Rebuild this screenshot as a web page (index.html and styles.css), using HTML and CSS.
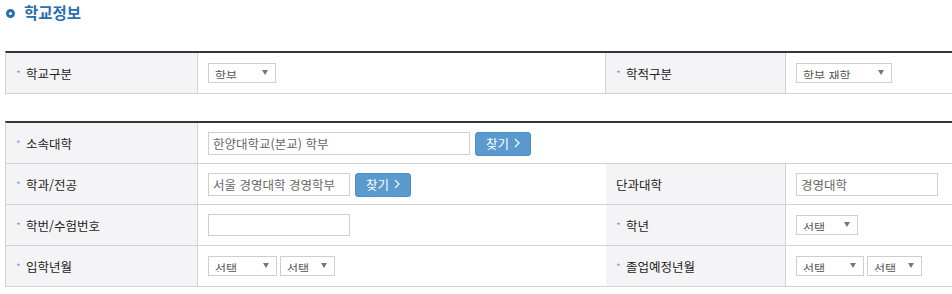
FILE: index.html
```html
<!DOCTYPE html>
<html lang="ko">
<head>
    <meta charset="UTF-8">
    <title>학교정보</title>
    <link rel="stylesheet" href="styles.css">
</head>
<body>

<div class="section">
    <h2 class="sec-title"><span class="dot"></span>학교정보</h2>

    <div class="form-grid">
        <div class="th"><span class="req">*</span>학교구분</div>
        <div class="td">
            <div class="sel w68"><span class="sel-text">학부</span><i class="arr"></i></div>
        </div>
        <div class="th"><span class="req">*</span>학적구분</div>
        <div class="td">
            <div class="sel w96"><span class="sel-text">학부 재학</span><i class="arr"></i></div>
        </div>
    </div>

    <div class="form-grid second">
        <div class="th"><span class="req">*</span>소속대학</div>
        <div class="td span3">
            <input class="txt w261" type="text" value="한양대학교(본교) 학부">
            <button class="btn-find" type="button">찾기<svg width="6" height="10" viewBox="0 0 6 10"><path d="M1 1l4 4-4 4" fill="none" stroke="#fff" stroke-width="1.2"/></svg></button>
        </div>

        <div class="th"><span class="req">*</span>학과/전공</div>
        <div class="td">
            <input class="txt w141" type="text" value="서울 경영대학 경영학부">
            <button class="btn-find" type="button">찾기<svg width="6" height="10" viewBox="0 0 6 10"><path d="M1 1l4 4-4 4" fill="none" stroke="#fff" stroke-width="1.2"/></svg></button>
        </div>
        <div class="th">단과대학</div>
        <div class="td">
            <input class="txt w141" type="text" value="경영대학">
        </div>

        <div class="th"><span class="req">*</span>학번/수험번호</div>
        <div class="td">
            <input class="txt w141 short" type="text" value="">
        </div>
        <div class="th"><span class="req">*</span>학년</div>
        <div class="td">
            <div class="sel w62"><span class="sel-text">선택</span><i class="arr"></i></div>
        </div>

        <div class="th"><span class="req">*</span>입학년월</div>
        <div class="td">
            <div class="sel w69"><span class="sel-text">선택</span><i class="arr"></i></div>
            <div class="sel w55"><span class="sel-text">선택</span><i class="arr"></i></div>
        </div>
        <div class="th"><span class="req">*</span>졸업예정년월</div>
        <div class="td">
            <div class="sel w68"><span class="sel-text">선택</span><i class="arr"></i></div>
            <div class="sel w55"><span class="sel-text">선택</span><i class="arr"></i></div>
        </div>
    </div>
</div>

</body>
</html>
```

FILE: styles.css
```css
html,body{
    margin: 0;
    padding: 0;
    background: #fff;
    overflow: hidden;
}
body{
    font-family: "Noto Sans CJK KR", "Noto Sans", sans-serif;
    font-size: 12px;
    color: #222;
}
.section{
    padding-left: 5px;
}
.sec-title{
    display: flex;
    align-items: center;
    margin: 0;
    padding: 0 0 0 1px;
    height: 24px;
    font-size: 15.5px;
    font-weight: bold;
    color: #2a6db0;
}
.sec-title .dot{
    display: inline-block;
    box-sizing: border-box;
    width: 9px;
    height: 9px;
    margin: 3px 9px 0 0;
    border: 3px solid #2a6db0;
    border-radius: 50%;
}
.form-grid{
    display: grid;
    grid-template-columns: 192px 408px 180px 1fr;
    width: 947px;
    margin-top: 27px;
    border-top: 2px solid #33373b;
    border-left: 1px solid #d2d2d2;
}
.form-grid.second{
    margin-top: 27px;
}
.th,.td{
    display: flex;
    align-items: center;
    height: 40px;
    border-right: 1px solid #d2d2d2;
    border-bottom: 1px solid #d2d2d2;
}
.th{
    padding-left: 10px;
    background: #f4f4f6;
    font-size: 12.5px;
    color: #222;
}
.td{
    padding-left: 10px;
    gap: 5px;
}
.td:last-child,.td:nth-child(4n){
    border-right: 0;
}
.span3{
    grid-column: span 3;
    border-right: 0;
}
.req{
    display: inline-block;
    position: relative;
    top: 1px;
    width: 10px;
    font-size: 10px;
    line-height: 10px;
    color: #7ba7dd;
}
.txt{
    box-sizing: border-box;
    height: 23px;
    margin: 0;
    padding: 0 4px;
    border: 1px solid #cfcfcf;
    font-family: inherit;
    font-size: 12.5px;
    color: #666;
    background: #fff;
    outline: none;
}
.txt.short{
    height: 22px;
}
.w261{ width: 262px; }
.w141{ width: 142px; }
.btn-find{
    display: inline-flex;
    align-items: center;
    justify-content: center;
    gap: 5px;
    box-sizing: border-box;
    width: 56px;
    height: 24px;
    margin: 1px 0 0;
    padding: 0 0 1px;
    border: 1px solid #4f8cc2;
    border-radius: 3px;
    background: #5b9acf;
    font-family: inherit;
    font-size: 12.5px;
    color: #fff;
}
.sel{
    position: relative;
    display: inline-block;
    box-sizing: border-box;
    height: 20px;
    border: 1px solid #cfcfcf;
    background: #fff;
}
.td .sel + .sel{
    margin-left: -2px;
}
.sel-text{
    display: block;
    height: 10px;
    margin: 5px 0 0 6px;
    overflow: hidden;
    line-height: 13px;
    font-size: 12px;
    color: #555;
    white-space: nowrap;
}
.arr{
    position: absolute;
    top: 6px;
    right: 7px;
    width: 0;
    height: 0;
    border-left: 3px solid transparent;
    border-right: 3px solid transparent;
    border-top: 5px solid #777;
}
.w55{ width: 55px; }
.w62{ width: 62px; }
.w68{ width: 68px; }
.w69{ width: 69px; }
.w96{ width: 96px; }
```
